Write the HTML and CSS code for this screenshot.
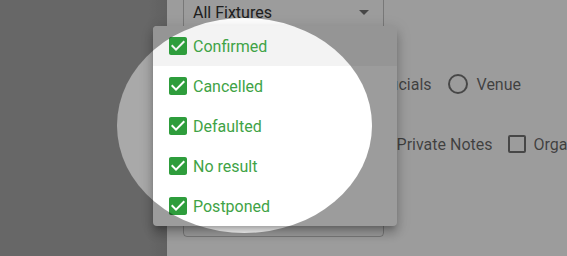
FILE: index.html
```html
<!DOCTYPE html>
<html>

<head>
  <meta charset="UTF-8">
  <title>Fixture filter</title>
  <link rel="stylesheet" href="styles.css">
</head>

<body>
  <div class="sidebar"></div>

  <div class="main">
    <div class="select-field">
      <span class="select-value">All Fixtures</span>
      <span class="select-arrow"></span>
    </div>

    <div class="option-row radio-row">
      <label class="option"><span class="radio"></span>Fixtures</label>
      <label class="option"><span class="radio"></span>Officials</label>
      <label class="option"><span class="radio"></span>Venue</label>
    </div>

    <div class="option-row check-row">
      <label class="option"><span class="box"></span>Public Notes</label>
      <label class="option"><span class="box"></span>Private Notes</label>
      <label class="option"><span class="box"></span>Organiser</label>
    </div>

    <div class="notes-field"></div>
  </div>

  <!-- status menu, open over the form -->
  <ul class="status-menu">
    <li class="menu-item hover">
      <svg class="check-icon" viewBox="0 0 24 24"><path d="M19 3H5c-1.11 0-2 .9-2 2v14c0 1.1.89 2 2 2h14c1.11 0 2-.9 2-2V5c0-1.1-.89-2-2-2zm-9 14l-5-5 1.41-1.41L10 14.17l7.59-7.59L19 8l-9 9z"/></svg>
      Confirmed
    </li>
    <li class="menu-item">
      <svg class="check-icon" viewBox="0 0 24 24"><path d="M19 3H5c-1.11 0-2 .9-2 2v14c0 1.1.89 2 2 2h14c1.11 0 2-.9 2-2V5c0-1.1-.89-2-2-2zm-9 14l-5-5 1.41-1.41L10 14.17l7.59-7.59L19 8l-9 9z"/></svg>
      Cancelled
    </li>
    <li class="menu-item">
      <svg class="check-icon" viewBox="0 0 24 24"><path d="M19 3H5c-1.11 0-2 .9-2 2v14c0 1.1.89 2 2 2h14c1.11 0 2-.9 2-2V5c0-1.1-.89-2-2-2zm-9 14l-5-5 1.41-1.41L10 14.17l7.59-7.59L19 8l-9 9z"/></svg>
      Defaulted
    </li>
    <li class="menu-item">
      <svg class="check-icon" viewBox="0 0 24 24"><path d="M19 3H5c-1.11 0-2 .9-2 2v14c0 1.1.89 2 2 2h14c1.11 0 2-.9 2-2V5c0-1.1-.89-2-2-2zm-9 14l-5-5 1.41-1.41L10 14.17l7.59-7.59L19 8l-9 9z"/></svg>
      No result
    </li>
    <li class="menu-item">
      <svg class="check-icon" viewBox="0 0 24 24"><path d="M19 3H5c-1.11 0-2 .9-2 2v14c0 1.1.89 2 2 2h14c1.11 0 2-.9 2-2V5c0-1.1-.89-2-2-2zm-9 14l-5-5 1.41-1.41L10 14.17l7.59-7.59L19 8l-9 9z"/></svg>
      Postponed
    </li>
  </ul>

  <!-- spotlight: dims everything outside the ellipse -->
  <div class="spotlight"></div>
</body>

</html>
```

FILE: styles.css
```css
* {
  margin: 0;
  padding: 0;
  box-sizing: border-box;
}

html,
body {
  height: 100%;
}

body {
  font-family: Roboto, "Liberation Sans", sans-serif;
  display: flex;
  overflow: hidden;
  background: white;
}

/* left drawer */
.sidebar {
  width: 167px;
  flex-shrink: 0;
  background: linear-gradient(to right, #a9a9a9 88%, #9e9e9e 100%);
}

/* form area */
.main {
  flex: 1;
  min-width: 0;
  padding-left: 16px;
  display: flex;
  flex-direction: column;
  background: white;
}

.select-field {
  width: 201px;
  height: 56px;
  margin-top: -16px;
  border: 1px solid rgba(0, 0, 0, 0.23);
  border-radius: 4px;
  display: flex;
  align-items: center;
  justify-content: space-between;
  padding: 0 14px 0 9px;
  font-size: 16px;
  color: #333;
}

.select-arrow {
  width: 0;
  height: 0;
  border-left: 5px solid transparent;
  border-right: 5px solid transparent;
  border-top: 5px solid rgba(0, 0, 0, 0.54);
}

.option-row {
  display: flex;
  align-items: center;
  height: 40px;
  font-size: 16px;
  color: rgba(0, 0, 0, 0.6);
}

.radio-row {
  margin-top: 24px;
  padding-left: 60px;
  gap: 16px;
}

.check-row {
  margin-top: 20px;
  padding-left: 53px;
  gap: 12px;
}

.option {
  display: flex;
  align-items: center;
  gap: 9px;
  white-space: nowrap;
}

.radio {
  width: 20px;
  height: 20px;
  border: 2px solid rgba(0, 0, 0, 0.54);
  border-radius: 50%;
}

.box {
  width: 18px;
  height: 18px;
  margin-left: 3px;
  border: 2px solid rgba(0, 0, 0, 0.54);
  border-radius: 2px;
}

.check-row .option {
  gap: 8px;
}

.notes-field {
  width: 201px;
  height: 61px;
  margin-top: 12px;
  border: 1px solid rgba(0, 0, 0, 0.23);
  border-radius: 4px;
}

/* status menu */
.status-menu {
  position: absolute;
  left: 153px;
  top: 26px;
  width: 244px;
  list-style: none;
  background: white;
  border-radius: 4px;
  overflow: hidden;
  box-shadow: 0 5px 5px -3px rgba(0, 0, 0, 0.2), 0 8px 10px 1px rgba(0, 0, 0, 0.14), 0 3px 14px 2px rgba(0, 0, 0, 0.12);
}

.menu-item {
  height: 40px;
  display: flex;
  align-items: center;
  gap: 3px;
  padding-left: 13px;
  font-size: 16px;
  color: #3fa346;
}

.menu-item.hover {
  background-color: #f3f3f3;
}

.check-icon {
  width: 24px;
  height: 24px;
  fill: #2e9d3c;
}

/* spotlight overlay */
.spotlight {
  position: absolute;
  left: 117px;
  top: 18px;
  width: 255px;
  height: 215px;
  border-radius: 50%;
  box-shadow: 0 0 1px 800px rgba(0, 0, 0, 0.39);
  pointer-events: none;
}
```
